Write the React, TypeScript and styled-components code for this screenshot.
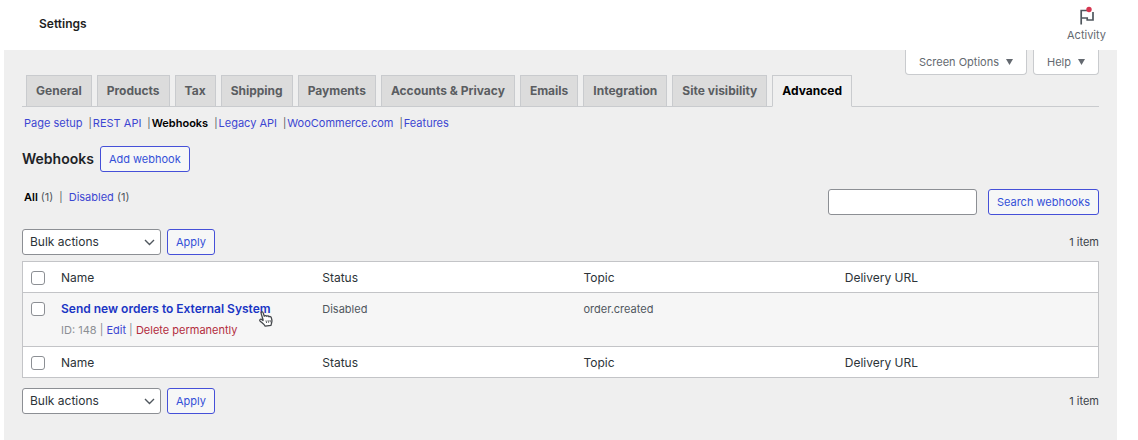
import React from "react";
import styled, { createGlobalStyle, css } from "styled-components";

const GlobalStyle = createGlobalStyle`
  *, *::before, *::after { box-sizing: border-box; }
  body {
    margin: 0;
    background: #fff;
    color: #3c434a;
    font-family: Inter, "Liberation Sans", sans-serif;
    font-size: 12px;
    line-height: 16px;
  }
  button, input, select { font: inherit; margin: 0; }
`;

const Header = styled.header`
  display: flex;
  justify-content: space-between;
  align-items: center;
  height: 50px;
  padding: 0 32px 2px 39px;
`;

const PageTitle = styled.h1`
  margin: 0;
  font-size: 12px;
  font-weight: 600;
  color: #1e1e1e;
`;

const ActivityButton = styled.button`
  display: flex;
  flex-direction: column;
  align-items: center;
  gap: 2px;
  padding: 0;
  border: 0;
  background: none;
  color: #646970;
  font-size: 11px;
`;

const Body = styled.main`
  min-height: calc(100vh - 50px);
  margin: 0 21px 0 4px;
  padding: 0 18px 24px;
  background: #efefef;
`;

const ScreenMeta = styled.div`
  display: flex;
  justify-content: flex-end;
  gap: 6px;
`;

const MetaButton = styled.button`
  display: flex;
  align-items: center;
  gap: 7px;
  height: 25px;
  padding: 0 13px;
  border: 1px solid #c9cbce;
  border-top: 0;
  border-radius: 0 0 4px 4px;
  background: #fff;
  color: #646970;
  font-size: 11px;
`;

const Tabs = styled.nav`
  display: flex;
  gap: 5px;
  padding-left: 4px;
  border-bottom: 1px solid #c9cbce;
`;

const Tab = styled.a<{ $active?: boolean }>`
  height: 32px;
  margin-bottom: -1px;
  padding: 7px 9px;
  border: 1px solid #c9cbce;
  border-bottom-color: ${(p) => (p.$active ? "#efefef" : "#c9cbce")};
  background: ${(p) => (p.$active ? "#efefef" : "#dcdcdc")};
  color: ${(p) => (p.$active ? "#000" : "#5a5d61")};
  font-weight: 700;
  text-decoration: none;
  white-space: nowrap;
`;

const LinkList = styled.ul<{ $gap: number }>`
  display: flex;
  margin: 0;
  padding: 0 2px;
  list-style: none;
  font-size: 11px;
  color: #50575e;
  li + li::before {
    content: "|";
    margin: 0 ${(p) => p.$gap}px 0 6px;
    font-size: 10px;
  }
`;

const SectionNav = styled.nav`
  padding-top: 8px;
`;

const Link = styled.a<{ $current?: boolean }>`
  color: ${(p) => (p.$current ? "#000" : "#3c46d2")};
  font-weight: ${(p) => (p.$current ? 600 : 400)};
  text-decoration: none;
`;

const TitleRow = styled.div`
  display: flex;
  align-items: center;
  gap: 6px;
  margin-top: 15px;
`;

const SectionTitle = styled.h2`
  margin: 0;
  font-size: 14px;
  font-weight: 600;
  color: #1d2327;
`;

const control = css`
  height: 26px;
  border-radius: 3px;
`;

const Button = styled.button`
  ${control}
  padding: 0 8px;
  border: 1px solid #4550d8;
  background: #f6f7f7;
  color: #3450d8;
  font-size: 11px;
  white-space: nowrap;
`;

const FilterRow = styled.div`
  display: flex;
  justify-content: space-between;
  align-items: flex-start;
  margin: 17px 0 14px;
`;

const SearchForm = styled.form`
  display: flex;
  gap: 11px;
`;

const SearchInput = styled.input`
  ${control}
  width: 149px;
  border: 1px solid #8c8f94;
  background: #fff;
`;

const BulkBar = styled.div`
  display: flex;
  align-items: center;
  gap: 6px;
`;

const SelectBox = styled.span`
  display: grid;
  align-items: center;
  width: 139px;
  > * { grid-area: 1 / 1; }
  > svg { justify-self: end; margin-right: 6px; pointer-events: none; }
`;

const Select = styled.select`
  ${control}
  appearance: none;
  width: 100%;
  padding: 0 24px 0 7px;
  border: 1px solid #8c8f94;
  background: #fff;
  color: #2c3338;
`;

const ItemCount = styled.span`
  margin-left: auto;
  font-size: 11px;
`;

const Table = styled.table`
  width: 100%;
  margin: 6px 0 10px;
  table-layout: fixed;
  border-collapse: separate;
  border-spacing: 0;
  border: 1px solid #c3c4c7;
  background: #fff;
  text-align: left;
  th, td { vertical-align: top; }
  th { padding: 8px 8px 6px; font-weight: 400; color: #2c3338; }
  td { padding: 8px; color: #50575e; font-size: 11px; }
  tbody td { height: 54px; background: #f6f6f6; border: solid #c3c4c7; border-width: 1px 0; }
`;

const CheckColumn = styled.col`
  width: 30px;
`;

const Checkbox = styled.input`
  appearance: none;
  display: block;
  width: 14px;
  height: 14px;
  margin-top: 1px;
  border: 1px solid #8c8f94;
  border-radius: 3px;
  background: #fff;
`;

const RowTitle = styled.a`
  position: relative;
  color: #1a35c4;
  font-size: 12px;
  font-weight: 600;
  text-decoration: none;
`;

const RowActions = styled.div`
  margin-top: 5px;
  color: #8c8f94;
`;

const DeleteLink = styled(Link)`
  color: #b32d3e;
`;

const Pointer = styled.svg`
  position: absolute;
  right: -3px;
  top: 9px;
`;

const tabs = [
  "General", "Products", "Tax", "Shipping", "Payments",
  "Accounts & Privacy", "Emails", "Integration", "Site visibility", "Advanced",
];
const sections = ["Page setup", "REST API", "Webhooks", "Legacy API", "WooCommerce.com", "Features"];
const columns = ["Name", "Status", "Topic", "Delivery URL"];

const FlagIcon = () => (
  <svg width="18" height="19" viewBox="0 0 18 19" fill="none" aria-hidden="true">
    <path d="M3.200 18.500V4.500H9M3.200 12H9.200V14H15V6" stroke="#50575e" strokeWidth="1.700" />
    <circle cx="11" cy="3.500" r="2.700" fill="#d63650" />
  </svg>
);

const Caret = () => (
  <svg width="7" height="6" viewBox="0 0 7 6" aria-hidden="true">
    <path d="M0 0H7L3.500 6Z" fill="#646970" />
  </svg>
);

const Chevron = () => (
  <svg width="11" height="7" viewBox="0 0 11 7" fill="none" aria-hidden="true">
    <path d="M1 1L5.500 5.500L10 1" stroke="#50575e" strokeWidth="1.400" />
  </svg>
);

const HandPointer = () => (
  <Pointer width="16" height="17" viewBox="0 0 16 17" aria-hidden="true">
    <path
      d="M5 9.500L3.200 3.600C2.700 1.800 4.700 1.200 5.200 2.900L6.300 6.200C7 5.500 8.200 5.600 8.600 6.300C9.400 5.700 10.500 5.900 10.900 6.700C11.800 6.200 13 6.600 13.300 7.600L13.900 10.200C14.200 12 13.500 13 13 15.300L7.200 16.200C6.500 14.500 4.300 13 2.200 11.200C1 10 2.300 8.700 3.600 9.400L5 10.500Z"
      fill="#fff" stroke="#44474b" strokeWidth="1.300" strokeLinejoin="round"
    />
    <path d="M8 10.500L8.600 13M10 10.200L10.500 12.700M12 10L12.300 12.300" stroke="#44474b" strokeWidth="0.900" />
  </Pointer>
);

const BulkActions = ({ place }: { place: string }) => (
  <BulkBar>
    <SelectBox>
      <Select aria-label={`Select bulk action, ${place}`}>
        <option>Bulk actions</option>
        <option>Delete permanently</option>
      </Select>
      <Chevron />
    </SelectBox>
    <Button type="button">Apply</Button>
    <ItemCount>1 item</ItemCount>
  </BulkBar>
);

const HeadingRow = () => (
  <tr>
    <th><Checkbox type="checkbox" aria-label="Select all" /></th>
    {columns.map((name) => <th key={name} scope="col">{name}</th>)}
  </tr>
);

export default function App() {
  return (
    <>
      <GlobalStyle />
      <Header>
        <PageTitle>Settings</PageTitle>
        <ActivityButton type="button">
          <FlagIcon />
          Activity
        </ActivityButton>
      </Header>
      <Body>
        <ScreenMeta>
          <MetaButton type="button">Screen Options <Caret /></MetaButton>
          <MetaButton type="button">Help <Caret /></MetaButton>
        </ScreenMeta>
        <Tabs aria-label="Settings">
          {tabs.map((name) => (
            <Tab key={name} href="#" $active={name === "Advanced"}>{name}</Tab>
          ))}
        </Tabs>
        <SectionNav aria-label="Advanced">
          <LinkList $gap={1}>
            {sections.map((name) => (
              <li key={name}><Link href="#" $current={name === "Webhooks"}>{name}</Link></li>
            ))}
          </LinkList>
        </SectionNav>
        <TitleRow>
          <SectionTitle>Webhooks</SectionTitle>
          <Button type="button">Add webhook</Button>
        </TitleRow>
        <FilterRow>
          <LinkList $gap={6}>
            <li><Link href="#" $current>All</Link> (1)</li>
            <li><Link href="#">Disabled</Link> (1)</li>
          </LinkList>
          <SearchForm>
            <SearchInput type="search" aria-label="Search webhooks" />
            <Button type="button">Search webhooks</Button>
          </SearchForm>
        </FilterRow>
        <BulkActions place="top" />
        <Table>
          <colgroup>
            <CheckColumn />
            {columns.map((name) => <col key={name} />)}
          </colgroup>
          <thead><HeadingRow /></thead>
          <tbody>
            <tr>
              <td><Checkbox type="checkbox" aria-label="Select Send new orders to External System" /></td>
              <td>
                <RowTitle href="#">Send new orders to External System<HandPointer /></RowTitle>
                <RowActions>
                  ID: 148 | <Link href="#">Edit</Link> | <DeleteLink href="#">Delete permanently</DeleteLink>
                </RowActions>
              </td>
              <td>Disabled</td>
              <td>order.created</td>
              <td />
            </tr>
          </tbody>
          <tfoot><HeadingRow /></tfoot>
        </Table>
        <BulkActions place="bottom" />
      </Body>
    </>
  );
}
